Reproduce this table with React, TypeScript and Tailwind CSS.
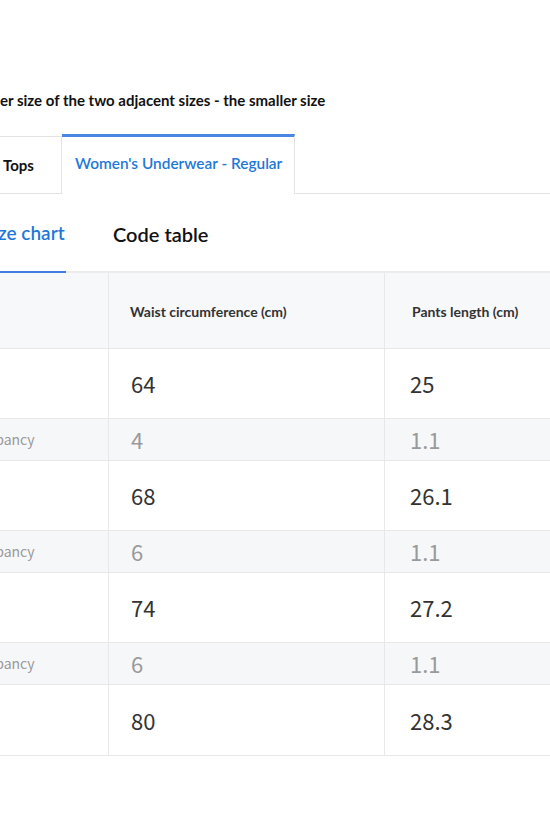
import React from "react";

type Row = { kind: "size" | "gap"; label: string; waist: string; length: string };

const rows: Row[] = [
  { kind: "size", label: "", waist: "64", length: "25" },
  { kind: "gap", label: "Discrepancy", waist: "4", length: "1.1" },
  { kind: "size", label: "", waist: "68", length: "26.1" },
  { kind: "gap", label: "Discrepancy", waist: "6", length: "1.1" },
  { kind: "size", label: "", waist: "74", length: "27.2" },
  { kind: "gap", label: "Discrepancy", waist: "6", length: "1.1" },
  { kind: "size", label: "", waist: "80", length: "28.3" },
];

const lato = "font-['Lato','Liberation_Sans',sans-serif]";
const num = "font-['Noto_Sans_CJK_KR','Noto_Sans',sans-serif]";

export default function App() {
  return (
    <div className="h-[825px] w-[550px] overflow-hidden bg-white text-[#222]">
      <div className="h-[90px]" />

      <p className={`${lato} h-[20px] whitespace-nowrap text-[15px] font-bold leading-[20px] text-[#111]`}>
        er size of the two adjacent sizes - the smaller size
      </p>

      <div className="h-[24px]" />

      {/* size category tabs */}
      <div className={`${lato} flex h-[60px] items-end whitespace-nowrap`}>
        <div className="flex h-[58px] w-[62px] shrink-0 items-center border border-l-0 border-[#e3e3e3] pl-[3px] text-[15px] font-bold text-[#111]">
          Tops
        </div>
        <div className="flex h-[60px] shrink-0 items-center border-t-[3px] border-r border-t-[#4a86e4] border-r-[#e3e3e3] pl-[13px] pr-[12px] pb-[3px] text-[15.4px] font-semibold text-[#1f78d8]">
          Women's Underwear - Regular
        </div>
        <div className="h-full flex-1 border-b border-[#e3e3e3]" />
      </div>

      {/* chart / code tabs */}
      <div className={`${lato} flex h-[79px] items-stretch whitespace-nowrap border-b-2 border-[#ececec]`}>
        <div className="-mb-[2px] flex w-[66px] shrink-0 items-center overflow-hidden border-b-2 border-[#3f7fe0] pt-[2px] text-[19px] font-semibold text-[#1f78d8]">
          <span className="-ml-[2px]">ze chart</span>
        </div>
        <div className="flex items-center pl-[47px] pt-[2px] text-[20px] font-semibold text-[#111]">
          Code table
        </div>
      </div>

      {/* size table */}
      <div className="w-[700px]">
        <div className={`${lato} grid h-[76px] grid-cols-[109px_276px_1fr] border-b border-[#e8e8e8] bg-[#f7f8fa] text-[14px] font-bold text-[#333]`}>
          <div className="border-r border-[#e8e8e8]" />
          <div className="flex items-center border-r border-[#e8e8e8] pl-[21px] pt-[2px]">Waist circumference (cm)</div>
          <div className="flex items-center pl-[27px] pt-[2px]">Pants length (cm)</div>
        </div>

        {rows.map((r, i) => (
          <div
            key={i}
            className={[
              "grid grid-cols-[109px_276px_1fr] border-b border-[#e8e8e8]",
              num,
              r.kind === "gap" ? "h-[42px] bg-[#f6f7f9] text-[#9a9a9a]" : "h-[70px] bg-white text-[#333]",
              i === 6 ? "h-[71px]" : "",
            ].join(" ")}
          >
            <div className="flex items-center overflow-hidden border-r border-[#e8e8e8]">
              {r.label ? (
                <span className="-ml-[45px] whitespace-nowrap text-[14px] text-[#9a9a9a]">{r.label}</span>
              ) : null}
            </div>
            <div className="flex items-center border-r border-[#e8e8e8] pl-[22px] text-[22px]">{r.waist}</div>
            <div className="flex items-center pl-[25px] text-[22px]">{r.length}</div>
          </div>
        ))}
      </div>
    </div>
  );
}
